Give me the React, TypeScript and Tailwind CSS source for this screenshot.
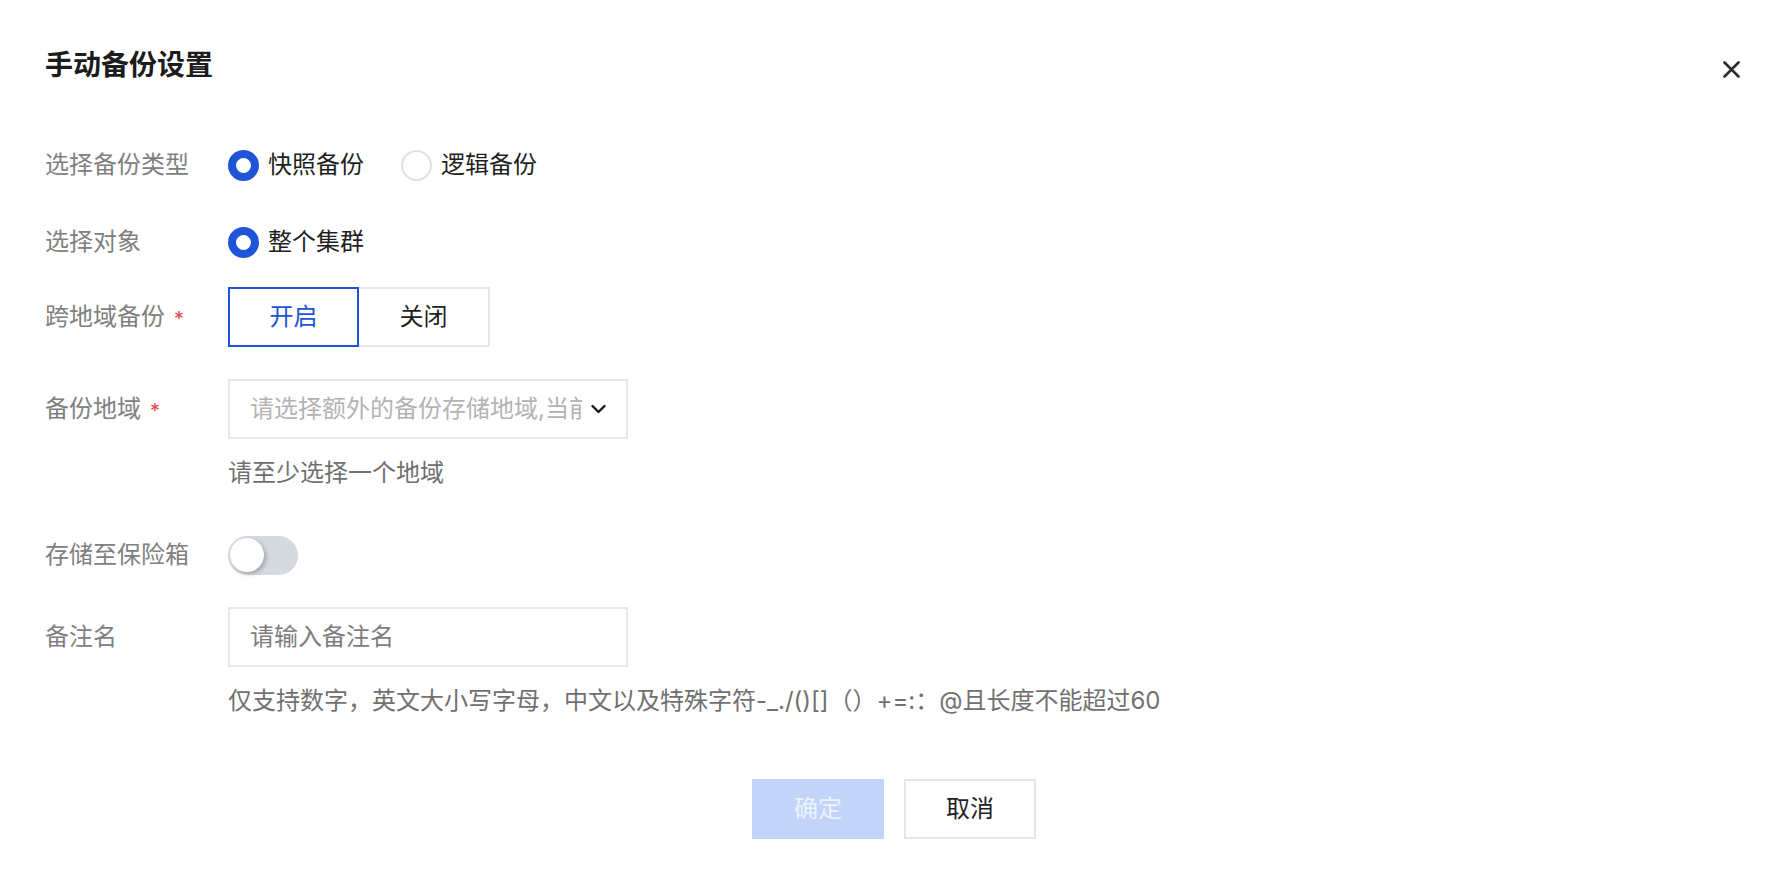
import React from "react";

const FONT = '"Inter", "Noto Sans CJK SC", sans-serif';

function Radio({ checked }: { checked: boolean }) {
  return checked ? (
    <span className="box-border h-[31px] w-[31px] shrink-0 rounded-full border-[8px] border-[#2054d6] bg-white" />
  ) : (
    <span className="box-border h-[31px] w-[31px] shrink-0 rounded-full border-2 border-[#dde0e6] bg-white" />
  );
}

function Label({ text, required }: { text: string; required?: boolean }) {
  return (
    <div className="flex w-[183px] shrink-0 items-center text-[24px] leading-[34px] text-[#808080]">
      <span>{text}</span>
      {required && <span className="ml-[9px] mt-[4px] text-[20px] text-[#e54545]">*</span>}
    </div>
  );
}

export default function App() {
  return (
    <div className="min-h-[884px] w-full bg-white" style={{ fontFamily: FONT }}>
      <div className="flex items-center justify-between pl-[45px] pr-[40px] pt-[45px]">
        <h1 className="text-[28px] font-bold leading-[40px] text-[#1c1c1c]">手动备份设置</h1>
        <button className="mt-[8px] flex h-[17px] w-[17px] items-center justify-center">
          <svg width="17" height="17" viewBox="0 0 17 17">
            <path d="M1.5 1.5 L15.5 15.5 M15.5 1.5 L1.5 15.5" stroke="#2b2b2b" strokeWidth="2.6" strokeLinecap="round" />
          </svg>
        </button>
      </div>

      <div className="flex flex-col pl-[45px]">
        {/* Row 1 */}
        <div className="mt-[50px] flex h-[60px] items-center">
          <Label text="选择备份类型" />
          <div className="flex items-center">
            <Radio checked />
            <span className="ml-[9px] text-[24px] leading-[34px] text-[#1f1f1f]">快照备份</span>
            <span className="ml-[37px]" />
            <Radio checked={false} />
            <span className="ml-[9px] text-[24px] leading-[34px] text-[#1f1f1f]">逻辑备份</span>
          </div>
        </div>

        {/* Row 2 */}
        <div className="mt-[17px] flex h-[60px] items-center">
          <Label text="选择对象" />
          <div className="flex items-center">
            <Radio checked />
            <span className="ml-[9px] text-[24px] leading-[34px] text-[#1f1f1f]">整个集群</span>
          </div>
        </div>

        {/* Row 3 */}
        <div className="mt-[15px] flex h-[60px] items-center">
          <Label text="跨地域备份" required />
          <div className="flex h-[60px]">
            <div className="box-border flex h-[60px] w-[131px] items-center justify-center border-2 border-[#2054d6] text-[24px] text-[#2054d6]">
              开启
            </div>
            <div className="box-border flex h-[60px] w-[131px] items-center justify-center border-2 border-l-0 border-[#e4e6eb] text-[24px] text-[#1f1f1f]">
              关闭
            </div>
          </div>
        </div>

        {/* Row 4 */}
        <div className="mt-[32px] flex h-[60px] items-center">
          <Label text="备份地域" required />
          <div className="box-border flex h-[60px] w-[400px] items-center border-2 border-[#e6e7ec] pl-[20px] pr-[20px]">
            <div className="min-w-0 flex-1 overflow-hidden whitespace-nowrap text-[24px] leading-[34px] text-[#b3b3b3]">
              请选择额外的备份存储地域,当前地域为默认备份地域
            </div>
            <svg className="ml-[9px] shrink-0" width="15" height="10" viewBox="0 0 15 10">
              <path d="M1.5 2 L7.5 8 L13.5 2" fill="none" stroke="#1a1a1a" strokeWidth="2.4" strokeLinecap="round" strokeLinejoin="round" />
            </svg>
          </div>
        </div>
        <div className="ml-[183px] mt-[17px] text-[24px] leading-[34px] text-[#707070]">请至少选择一个地域</div>

        {/* Row 5 */}
        <div className="mt-[35px] flex h-[60px] items-center">
          <Label text="存储至保险箱" />
          <div className="flex h-[39px] w-[70px] items-center rounded-full bg-[#d5d9e0] px-[2px]">
            <span className="h-[34px] w-[34px] rounded-full bg-white shadow-[2px_2px_4px_rgba(0,0,0,0.25)]" />
          </div>
        </div>

        {/* Row 6 */}
        <div className="mt-[22px] flex h-[60px] items-center">
          <Label text="备注名" />
          <div className="box-border flex h-[60px] w-[400px] items-center border-2 border-[#e6e7ec] pl-[20px]">
            <span className="text-[24px] leading-[34px] text-[#7d7d7d]">请输入备注名</span>
          </div>
        </div>
        <div className="ml-[183px] mt-[17px] whitespace-nowrap text-[24px] leading-[34px] text-[#707070]">
          仅支持数字，英文大小写字母，中文以及特殊字符-_./()[]（）+=:：@且长度不能超过60
        </div>
      </div>

      {/* Footer buttons */}
      <div className="mt-[61px] flex justify-center gap-[20px] pl-[8px]">
        <button className="flex h-[60px] w-[132px] items-center justify-center bg-[#c2d4f7] text-[24px] text-[#eef3fd]">
          确定
        </button>
        <button className="box-border flex h-[60px] w-[132px] items-center justify-center border-2 border-[#e4e6eb] bg-white text-[24px] text-[#1f1f1f]">
          取消
        </button>
      </div>
    </div>
  );
}
